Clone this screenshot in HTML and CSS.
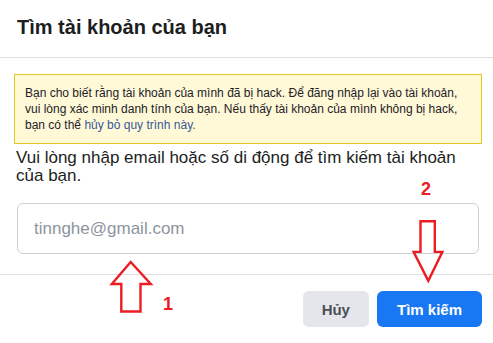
FILE: index.html
```html
<!DOCTYPE html>
<html lang="vi">
<head>
  <meta charset="UTF-8">
  <meta name="viewport" content="width=device-width, initial-scale=1.0">
  <title>Tìm tài khoản của bạn</title>
  <link rel="stylesheet" href="styles.css">
</head>

<body>
<div class="card">
  <div class="card-header">
    <h2 class="card-title">Tìm tài khoản của bạn</h2>
  </div>

  <div class="card-body">
    <div class="notice">
      Bạn cho biết rằng tài khoản của mình đã bị hack. Để đăng nhập lại vào tài khoản,
      vui lòng xác minh danh tính của bạn. Nếu thấy tài khoản của mình không bị hack,
      bạn có thể <a href="#" class="notice-link">hủy bỏ quy trình này.</a>
    </div>
    <p class="lead">Vui lòng nhập email hoặc số di động để tìm kiếm tài khoản của bạn.</p>
    <input type="text" class="search-input" placeholder="tinnghe@gmail.com">
  </div>

  <div class="card-footer">
    <button class="btn btn-cancel">Hủy</button>
    <button class="btn btn-search">Tìm kiếm</button>
  </div>

  <!-- red annotations on top of the screenshot -->
  <svg class="marks" width="493" height="343" viewBox="0 0 493 343">
    <polygon points="130.7,262 111.8,284 121.3,284 121.3,311.5 140.5,311.5 140.5,284 150.8,284"
             fill="none" stroke="#ed1c24" stroke-width="2.4" stroke-linejoin="miter"/>
    <text x="163" y="310" class="mark-num">1</text>
    <polygon points="420.5,221.2 434.8,221.2 434.8,251.9 442.4,251.9 428.3,280.8 413.6,251.9 420.5,251.9"
             fill="none" stroke="#ed1c24" stroke-width="2.4" stroke-linejoin="miter"/>
    <text x="421" y="195" class="mark-num">2</text>
  </svg>
</div>
</body>
</html>
```

FILE: styles.css
```css
/* styles */
body {
  margin: 0;
  background: #fff;
  font-family: "Liberation Sans", Arial, sans-serif;
  color: #1c1e21;
}

.card {
  position: relative;
  width: 493px;
  height: 343px;
  overflow: hidden;
}

.card-header {
  padding: 15px 17px 18px;
  border-bottom: 1px solid #dddfe2;
}

.card-title {
  margin: 0;
  font-size: 20px;
  line-height: 24px;
  font-weight: bold;
  color: #1c1e21;
}

.card-body {
  padding: 16px 11px 20px 14px;
  border-bottom: 1px solid #dddfe2;
}

.notice {
  background-color: #fff9d7;
  border: 1px solid #e2c822;
  padding: 10px 10px;
  font-size: 12px;
  line-height: 16px;
  color: #1d2129;
}

.notice-link {
  color: #385898;
  text-decoration: none;
}

.lead {
  margin: 5px 0 0 2px;
  font-size: 17px;
  line-height: 18px;
  color: #1c1e21;
}

.search-input {
  display: block;
  box-sizing: border-box;
  width: 462px;
  height: 51px;
  margin: 18px 0 0 3px;
  padding: 15px 16px;
  border: 1px solid #ccd0d5;
  border-radius: 6px;
  font-family: "Liberation Sans", Arial, sans-serif;
  font-size: 17px;
  color: #1c1e21;
  outline: none;
}

.search-input::placeholder {
  color: #8d949e;
}

.card-footer {
  display: flex;
  justify-content: flex-end;
  gap: 8px;
  padding: 16px 11px 0;
}

.btn {
  height: 36px;
  padding: 0 20px;
  border: none;
  border-radius: 6px;
  font-family: "Liberation Sans", Arial, sans-serif;
  font-size: 15px;
  font-weight: bold;
  cursor: pointer;
}

.btn-cancel {
  padding: 0 19px;
  background-color: #e4e6eb;
  color: #4b4f56;
}

.btn-search {
  background-color: #1877f2;
  color: #fff;
}

.marks {
  position: absolute;
  left: 0;
  top: 0;
  pointer-events: none;
}

.mark-num {
  fill: #ed1c24;
  font-family: "Liberation Sans", Arial, sans-serif;
  font-size: 18px;
  font-weight: bold;
}
```
